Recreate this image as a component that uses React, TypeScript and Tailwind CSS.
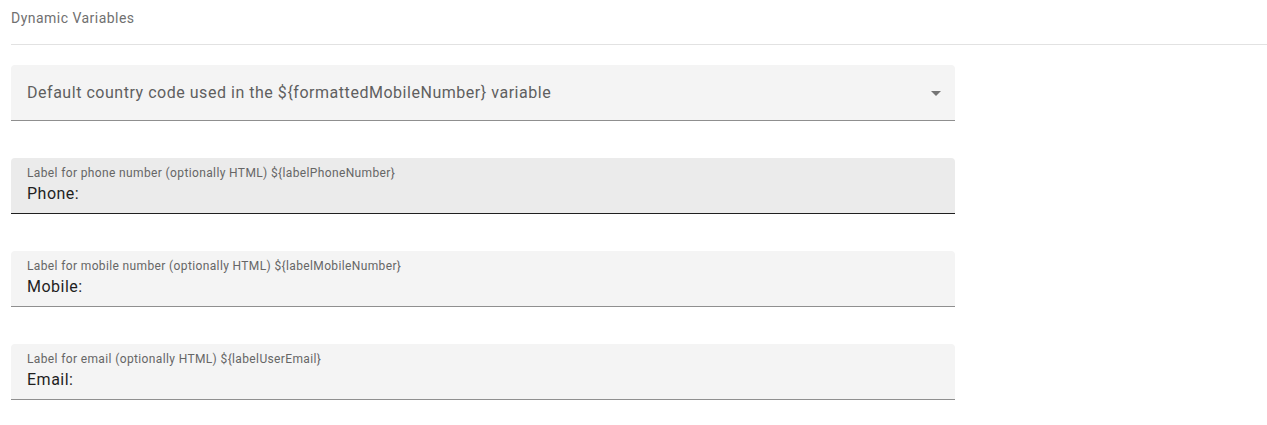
import React from 'react';

interface TextFieldProps {
  label: string;
  value: string;
  hovered?: boolean;
}

const TextField: React.FC<TextFieldProps> = ({ label, value, hovered }) => {
  return (
    <div
      className={`h-[56px] w-[944px] rounded-t-[4px] border-b px-4 pt-[7px] ${
        hovered ? 'bg-[#ebebeb] border-[#1f1f1f]' : 'bg-[#f4f4f4] border-[#8f8f8f]'
      }`}
    >
      <div className="text-[12px] leading-4 tracking-[0.37px] text-[#666666]">{label}</div>
      <div className="mt-[3px] text-[16px] leading-5 tracking-[0.5px] text-[#1f1f1f]">{value}</div>
    </div>
  );
};

export default function App() {
  return (
    <div className="min-h-[425px] bg-white pl-[11px] font-['Roboto',sans-serif]">
      {/* Header */}
      <div className="pt-2 text-[14px] leading-5 tracking-[0.47px] text-[#707070]">Dynamic Variables</div>
      <div className="mt-4 border-b border-[#e2e2e2]" />

      {/* Select */}
      <div className="mt-5 flex h-[56px] w-[944px] items-center justify-between rounded-t-[4px] border-b border-[#8f8f8f] bg-[#f4f4f4] pl-4 pr-[7px]">
        <span className="pt-[1px] text-[16px] leading-5 tracking-[0.53px] text-[#5f5f5f]">
          Default country code used in the ${'{'}formattedMobileNumber{'}'} variable
        </span>
        <svg width="24" height="24" viewBox="0 0 24 24" className="text-[#757575]">
          <path d="M7 10l5 5 5-5z" fill="currentColor" />
        </svg>
      </div>

      <div className="mt-[37px] flex flex-col gap-[37px]">
        <TextField
          label="Label for phone number (optionally HTML) ${labelPhoneNumber}"
          value="Phone:"
          hovered
        />
        <TextField
          label="Label for mobile number (optionally HTML) ${labelMobileNumber}"
          value="Mobile:"
        />
        <TextField
          label="Label for email (optionally HTML) ${labelUserEmail}"
          value="Email:"
        />
      </div>
    </div>
  );
}
